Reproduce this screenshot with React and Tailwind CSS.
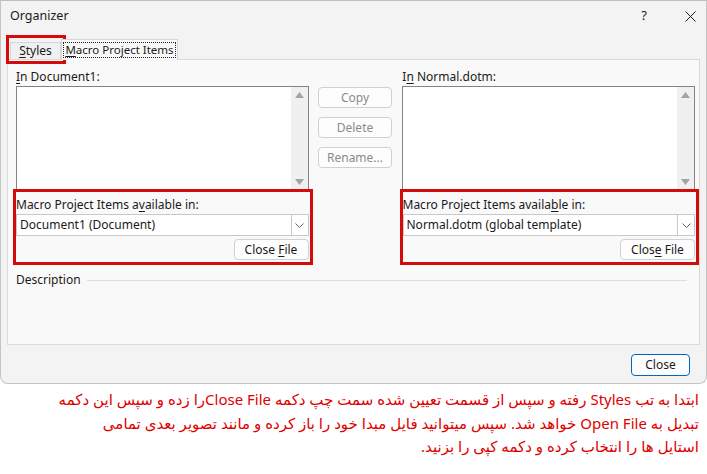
import React from 'react';

const ui = "font-['Noto_Sans',sans-serif]";

const U = ({ children }) => <span className="underline underline-offset-2">{children}</span>;

const ListBox = () => (
  <div className="flex h-[105px] border border-[#838383] bg-white">
    <div className="flex-1" />
    <div className="flex w-[17px] flex-col items-center justify-between bg-[#f0f0f0] py-[5px]">
      <svg width="9" height="6" viewBox="0 0 9 6"><path d="M0 6 L4.5 0 L9 6 Z" fill="#a3a3a3" /></svg>
      <svg width="9" height="6" viewBox="0 0 9 6"><path d="M0 0 L4.5 6 L9 0 Z" fill="#a3a3a3" /></svg>
    </div>
  </div>
);

const Btn = ({ children, disabled, className = '' }) => (
  <div
    className={`flex h-[21px] items-center justify-center rounded-[4px] border border-[#d0d0d0] bg-[#fdfdfd] ${disabled ? 'text-[#8a8a8a]' : 'text-[#1a1a1a]'} ${className}`}
  >
    <span className="whitespace-pre">{children}</span>
  </div>
);

const Chooser = ({ label, value, button }) => (
  <div className="relative flex flex-col">
    <div className="h-[20px] pt-[1px] leading-[20px]">{label}</div>
    <div className="flex h-[22px] border border-[#c9c9c9] bg-white">
      <div className="flex flex-1 items-center pl-[3px]">{value}</div>
      <div className="flex w-[17px] items-center justify-center border-l border-[#c9c9c9]">
        <svg width="9" height="5" viewBox="0 0 9 5"><path d="M0.5 0.5 L4.5 4.5 L8.5 0.5" fill="none" stroke="#606060" strokeWidth="1" /></svg>
      </div>
    </div>
    <div className="mt-[3px] flex justify-end">
      <Btn className="w-[75px]">{button}</Btn>
    </div>
    <div className="pointer-events-none absolute -left-[3px] -right-[4px] -top-[5px] -bottom-[5px] border-[3px] border-[#d40b0b]" />
  </div>
);

export default function App() {
  return (
    <div className={`h-[474px] w-[707px] overflow-hidden bg-white text-[12px] text-[#1a1a1a] ${ui}`}>
      <div className="flex h-[384px] flex-col rounded-b-[8px] border border-[#c4c4c4] border-t-[#bdbdbd] bg-[#f3f3f3]">
        {/* title bar */}
        <div className="flex h-[30px] items-center pl-[9px] pr-[10px]">
          <div className="flex-1 text-[12.5px]">Organizer</div>
          <div className="mr-[38px] text-[13px]">?</div>
          <svg width="11" height="11" viewBox="0 0 11 11"><path d="M0.5 0.5 L10.5 10.5 M10.5 0.5 L0.5 10.5" stroke="#1a1a1a" strokeWidth="1" /></svg>
        </div>

        {/* tabs */}
        <div className="mt-[8px] flex h-[20px] items-end pl-[9px]">
          <div className="relative flex h-[17px] w-[51px] items-center justify-center border border-b-0 border-[#d6d6d6] bg-[#f0f0f0]">
            <span><U>S</U>tyles</span>
            <div className="pointer-events-none absolute -left-[5px] -right-[6px] -top-[8px] -bottom-[5px] border-[3px] border-[#d40b0b]" />
          </div>
          <div className="relative z-10 -mb-px flex h-[21px] w-[117px] items-center justify-center border border-b-0 border-[#d6d6d6] bg-[#f9f9f9]">
            <span className="whitespace-nowrap border border-dotted border-[#222] px-[1px] text-[11.5px] leading-[14px]"><U>M</U>acro Project Items</span>
          </div>
        </div>

        {/* panel */}
        <div className="mx-[6px] flex h-[286px] flex-col border border-[#dadada] bg-[#f9f9f9] pl-[8px] pr-[4px]">
          <div className="flex">
            <div className="flex w-[294px] flex-col">
              <div className="h-[26px] pt-[8px] leading-[18px]"><U>I</U>n Document1:</div>
              <ListBox />
            </div>
            <div className="ml-[9px] mt-[27px] flex w-[75px] flex-col gap-[9px]">
              <Btn disabled>Copy</Btn>
              <Btn disabled>Delete</Btn>
              <Btn disabled>Rename...</Btn>
            </div>
            <div className="ml-[10px] flex w-[294px] flex-col">
              <div className="h-[26px] pt-[8px] leading-[18px]">I<U>n</U> Normal.dotm:</div>
              <ListBox />
            </div>
          </div>

          <div className="mt-[3px] flex">
            <div className="w-[294px]">
              <Chooser
                label={<>Macro Project Items a<U>v</U>ailable in:</>}
                value="Document1 (Document)"
                button={<>Close <U>F</U>ile</>}
              />
            </div>
            <div className="ml-[94px] w-[294px]">
              <Chooser
                label={<>Macro Project Items availa<U>b</U>le in:</>}
                value="Normal.dotm (global template)"
                button={<>Clos<U>e</U> File</>}
              />
            </div>
          </div>

          <div className="mt-[11px] flex items-center pr-[8px]">
            <span>Description</span>
            <div className="ml-[6px] h-px flex-1 bg-[#dcdcdc]" />
          </div>
        </div>

        {/* footer */}
        <div className="mt-[9px] flex justify-end pr-[16px]">
          <div className="flex h-[22px] w-[59px] items-center justify-center rounded-[4px] border border-[#0067c0] bg-[#fdfdfd]">
            Close
          </div>
        </div>
      </div>

      <div
        dir="rtl"
        className="px-[8px] pt-[4px] text-right text-[15px] leading-[23.5px] text-[#e00000] font-['Noto_Sans','DejaVu_Sans',sans-serif]"
      >
        <div>ابتدا به تب Styles رفته و سپس از قسمت تعیین شده سمت چپ دکمه Close Fileرا زده و سپس این دکمه</div>
        <div>تبدیل به Open File خواهد شد. سپس میتوانید فایل مبدا خود را باز کرده و مانند تصویر بعدی تمامی</div>
        <div>استایل ها را انتخاب کرده و دکمه کپی را بزنید.</div>
      </div>
    </div>
  );
}
